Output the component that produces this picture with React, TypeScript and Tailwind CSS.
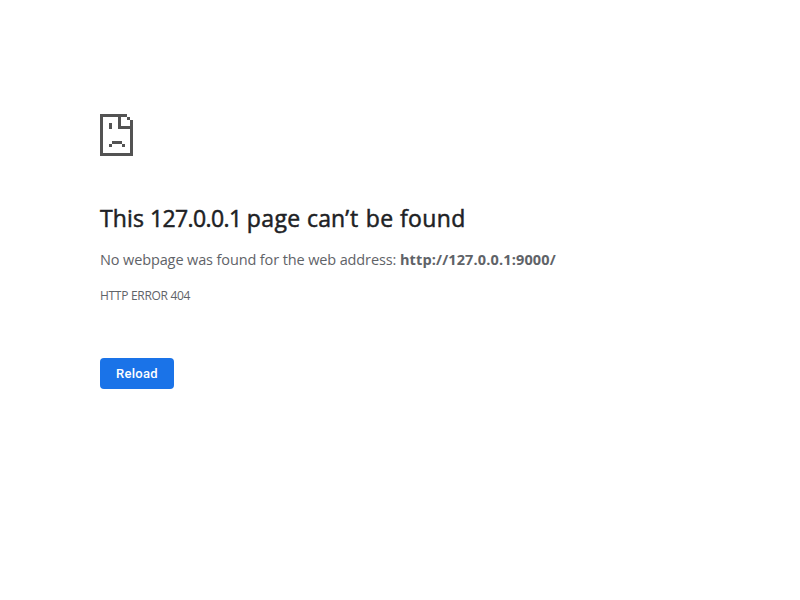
export default function App() {
  return (
    <main className="min-h-screen bg-white pl-[100px] pt-[114px] font-['Open_Sans','Noto_Sans',sans-serif] text-[#5f6368]">
      <svg width="33" height="42" viewBox="0 0 33 42" fill="#535353" shapeRendering="crispEdges" className="block">
        <path d="M0 0H27V3H21V12H33V15H18V3H3V39H30V15H33V42H0ZM27 3H30V6H27ZM30 6H33V15H30ZM9 9H12V15H9ZM12 27H22V30H12ZM9 30H12V33H9ZM22 30H25V33H22Z" />
      </svg>
      <h1 className="mt-[47px] flex h-[30px] items-center whitespace-pre text-[23px] font-normal text-[#202124] [-webkit-text-stroke:0.5px_#202124]">
        <span className="tracking-[0.1px]">This </span>
        <span className="tracking-[-0.62px]">127.0.0.1 </span>
        <span className="tracking-[0.4px]">page </span>
        <span className="tracking-[0.1px]">can</span>
        <span className="tracking-[0.8px]">’t </span>
        <span className="tracking-[0.4px]">be found</span>
      </h1>
      <p className="mt-[15px] h-6 whitespace-nowrap text-[14.5px] leading-6">
        <span className="tracking-[-0.12px]">No webpage was found for the web address: </span>
        <strong className="font-bold tracking-[0.14px]">http://127.0.0.1:9000/</strong>
      </p>
      <p className="mt-[14px] h-5 whitespace-nowrap text-[12px] leading-5 tracking-[-0.3px]">
        <span>HTTP ERROR 404</span>
      </p>
      <button className="mt-[52px] flex h-[31px] w-[74px] items-center justify-center rounded bg-[#1a73e8] font-['Roboto',sans-serif] text-[13px] font-medium tracking-[0.3px] text-white">
        Reload
      </button>
    </main>
  );
}
